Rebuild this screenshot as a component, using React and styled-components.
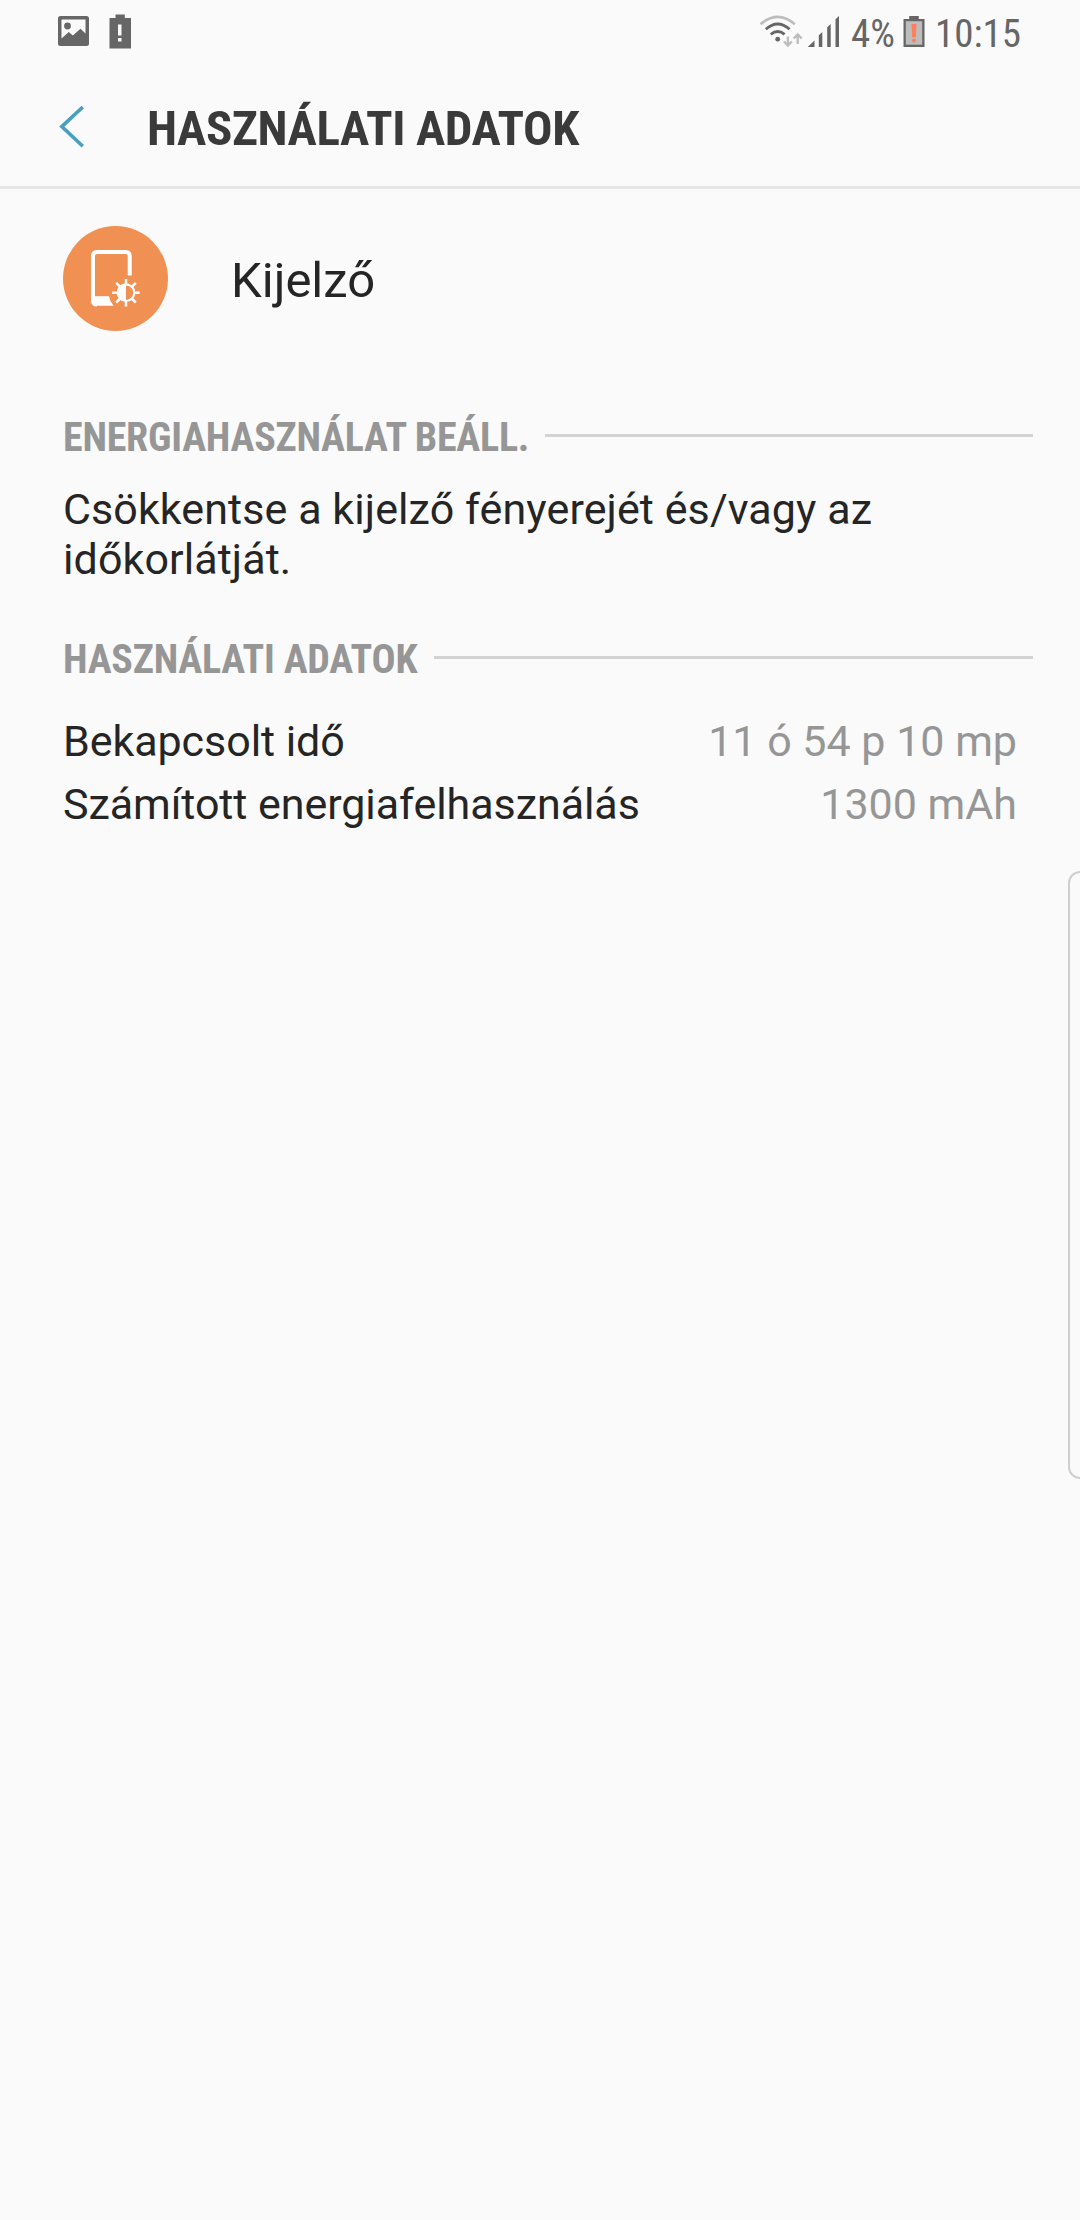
import React from 'react'
import styled, { createGlobalStyle } from 'styled-components'


const GlobalStyle = createGlobalStyle`
*{
  box-sizing:border-box;
}
body{
  margin:0;
  background-color:#fafafa;
  font-family:Roboto, sans-serif;
}
`

const Screen = styled.div`
position:relative;
width:1080px;
height:2220px;
overflow:hidden;
background-color:#fafafa;
color:#252525;
`

const StatusBar = styled.div`
display:flex;
justify-content:space-between;
height:63px;
padding:0 60px 0 57px;
color:#666;
svg{
  display:block;
}
`

const StatusGroup = styled.div`
display:flex;
align-items:flex-start;
`

const Gap = styled.div`
flex:none;
width:${props => props.$width}px;
`

const Condensed = styled.span`
display:block;
flex:none;
width:${props => props.$width}px;
white-space:nowrap;
font-family:"Roboto Condensed", Roboto, sans-serif;
font-stretch:75%;
`

const StatusText = styled(Condensed)`
font-size:39px;
line-height:46px;
margin-top:11px;
`

const Header = styled.header`
display:flex;
height:126px;
border-bottom:3px solid #e6e6e6;
padding-left:58px;
svg{
  display:block;
  margin-top:42px;
}
`

const Title = styled(Condensed)`
font-size:49px;
line-height:58px;
font-weight:700;
letter-spacing:-.4px;
color:#3a3a3a;
margin:37px 0 0 61px;
`

const AppRow = styled.div`
display:flex;
align-items:center;
gap:63px;
margin-top:37px;
padding-left:63px;
height:105px;
`

const AppIcon = styled.div`
width:105px;
height:105px;
border-radius:50%;
background-color:#f09053;
`

const AppName = styled.div`
font-size:49px;
line-height:58px;
padding-top:5px;
`

const SectionHeader = styled.div`
display:flex;
height:46px;
margin-top:${props => props.$top}px;
padding:0 47px 0 63px;
color:#969696;
`

const SectionTitle = styled(Condensed)`
font-size:40px;
line-height:46px;
font-weight:700;
letter-spacing:-.22px;
margin-top:-4px;
`

const Rule = styled.div`
flex:1;
height:3px;
margin-top:15px;
background-color:#d3d3d3;
`

const Hint = styled.p`
margin:19px 63px 0;
width:860px;
font-size:43px;
line-height:50px;
letter-spacing:.09px;
`

const Stats = styled.div`
margin-top:23px;
padding:0 63px;
`

const StatRow = styled.div`
display:flex;
justify-content:space-between;
font-size:43px;
line-height:63px;
letter-spacing:-.06px;
span{
  color:#969696;
  letter-spacing:0;
}
`

const EdgeHandle = styled.div`
position:absolute;
top:871px;
right:-12px;
width:24px;
height:608px;
border:2px solid #cfcfcf;
border-radius:20px;
`


function PictureIcon() {
  return (
    <svg width="32" height="60" viewBox="57 0 32 60">
      <path fill="#666" fillRule="evenodd" d="M60.5 16h26q2.500 0 2.500 2.500v25q0 2.500-2.500 2.500h-26q-2.500 0-2.500-2.500v-25q0-2.500 2.500-2.500zM61.500 19.500v19l7.300-6.500 4 3.500 7.700-6.700 5 4.700v-14z" />
      <circle cx="67.500" cy="26" r="3.400" fill="#666" />
    </svg>
  )
}

function BatteryAlertIcon() {
  return (
    <svg width="23" height="60" viewBox="109.500 0 23 60">
      <path fill="#666" d="M116 14.500h9.300V18h6.200v30.500H110V18h6z" />
      <path fill="#fafafa" d="M118.500 24.500h3.500v11h-3.500zM118.500 38h3.500v3.500h-3.500z" />
    </svg>
  )
}

function WifiIcon() {
  return (
    <svg width="46" height="60" viewBox="758 0 46 60" fill="none">
      <path stroke="#bdbdbd" strokeWidth="2.600" d="M760.500 24.300q17.200-14.800 34.400 0" />
      <path stroke="#666" strokeWidth="2.800" d="M765.800 29.300q11.900-10.600 23.800 0M770.800 34.300q6.900-5.700 13.800 0" />
      <circle cx="777.700" cy="39.200" r="2.400" fill="#666" />
      <path stroke="#bdbdbd" strokeWidth="2.400" d="M787.900 36.500v9M783.900 41.500l4 4 4-4M797.700 44v-9.500M793.700 38.500l4-4 4 4" />
    </svg>
  )
}

function SignalIcon() {
  return (
    <svg width="33" height="60" viewBox="807 0 33 60">
      <path fill="#666" d="M807.700 47l6.800-6.500V47zM818.800 47V35.300l3.500-3.300v15zM827.200 47V27.300l3.500-3.300v23zM835.500 47V19.300l3.500-3.300v31z" />
    </svg>
  )
}

function BatteryLowIcon() {
  return (
    <svg width="22" height="60" viewBox="902.500 0 22 60">
      <path fill="#666" d="M908.700 16h9.600v3h5.700v28h-21V19h5.700z" />
      <path fill="#bdbdbd" d="M905.300 21.200h16.400v23.500h-16.400z" />
      <path fill="#ff7f5c" d="M911 24h5l-.6 13.200h-3.800z" />
      <circle cx="913.500" cy="40.500" r="2" fill="#ff7f5c" />
    </svg>
  )
}

function BackIcon() {
  return (
    <svg width="28" height="44" viewBox="58 105 28 44">
      <path fill="none" stroke="#4a9fc1" strokeWidth="3.600" d="M82.800 107l-21 19.600 21 19.600" />
    </svg>
  )
}

// phone outline with the brightness sun in its corner
function DisplayIcon() {
  return (
    <svg width="105" height="105" viewBox="63 226 105 105">
      <g fill="none" stroke="#fff">
        <path strokeWidth="4" d="M129.700 275.500V256q0-4-4-4H97q-4 0-4 4v44.500q0 4 4 4" />
        <circle cx="126" cy="292.700" r="8.300" strokeWidth="2.200" />
        <path strokeWidth="2.500" d="M126 279v5M126 301.500v5M112.300 292.700h5M134.700 292.700h5M116.200 282.900l4 4M131.800 298.500l4 4M135.800 282.900l-4 4M120.200 298.500l-4 4" />
      </g>
      <path fill="#fff" d="M91 296.300h18q.8 5.200 4.500 9.500H97q-6 0-6-5zM126 284.500v16.400a8.200 8.200 0 0 1 0-16.400z" />
    </svg>
  )
}


function App() {
  return (
    <Screen>
      <GlobalStyle />
      <StatusBar>
        <StatusGroup>
          <PictureIcon />
          <Gap $width={20} />
          <BatteryAlertIcon />
        </StatusGroup>
        <StatusGroup>
          <WifiIcon />
          <Gap $width={3} />
          <SignalIcon />
          <Gap $width={11} />
          <StatusText $width={43}>4%</StatusText>
          <Gap $width={9} />
          <BatteryLowIcon />
          <Gap $width={10} />
          <StatusText $width={85}>10:15</StatusText>
        </StatusGroup>
      </StatusBar>

      <Header>
        <BackIcon />
        <Title $width={440}>HASZNÁLATI ADATOK</Title>
      </Header>

      <AppRow>
        <AppIcon><DisplayIcon /></AppIcon>
        <AppName>Kijelző</AppName>
      </AppRow>

      <SectionHeader $top={88}>
        <SectionTitle $width={482}>ENERGIAHASZNÁLAT BEÁLL.</SectionTitle>
        <Rule />
      </SectionHeader>
      <Hint>Csökkentse a kijelző fényerejét és/vagy az időkorlátját.</Hint>

      <SectionHeader $top={57}>
        <SectionTitle $width={371}>HASZNÁLATI ADATOK</SectionTitle>
        <Rule />
      </SectionHeader>
      <Stats>
        <StatRow>Bekapcsolt idő <span>11 ó 54 p 10 mp</span></StatRow>
        <StatRow>Számított energiafelhasználás <span>1300 mAh</span></StatRow>
      </Stats>

      <EdgeHandle />
    </Screen>
  )
}

export default App
